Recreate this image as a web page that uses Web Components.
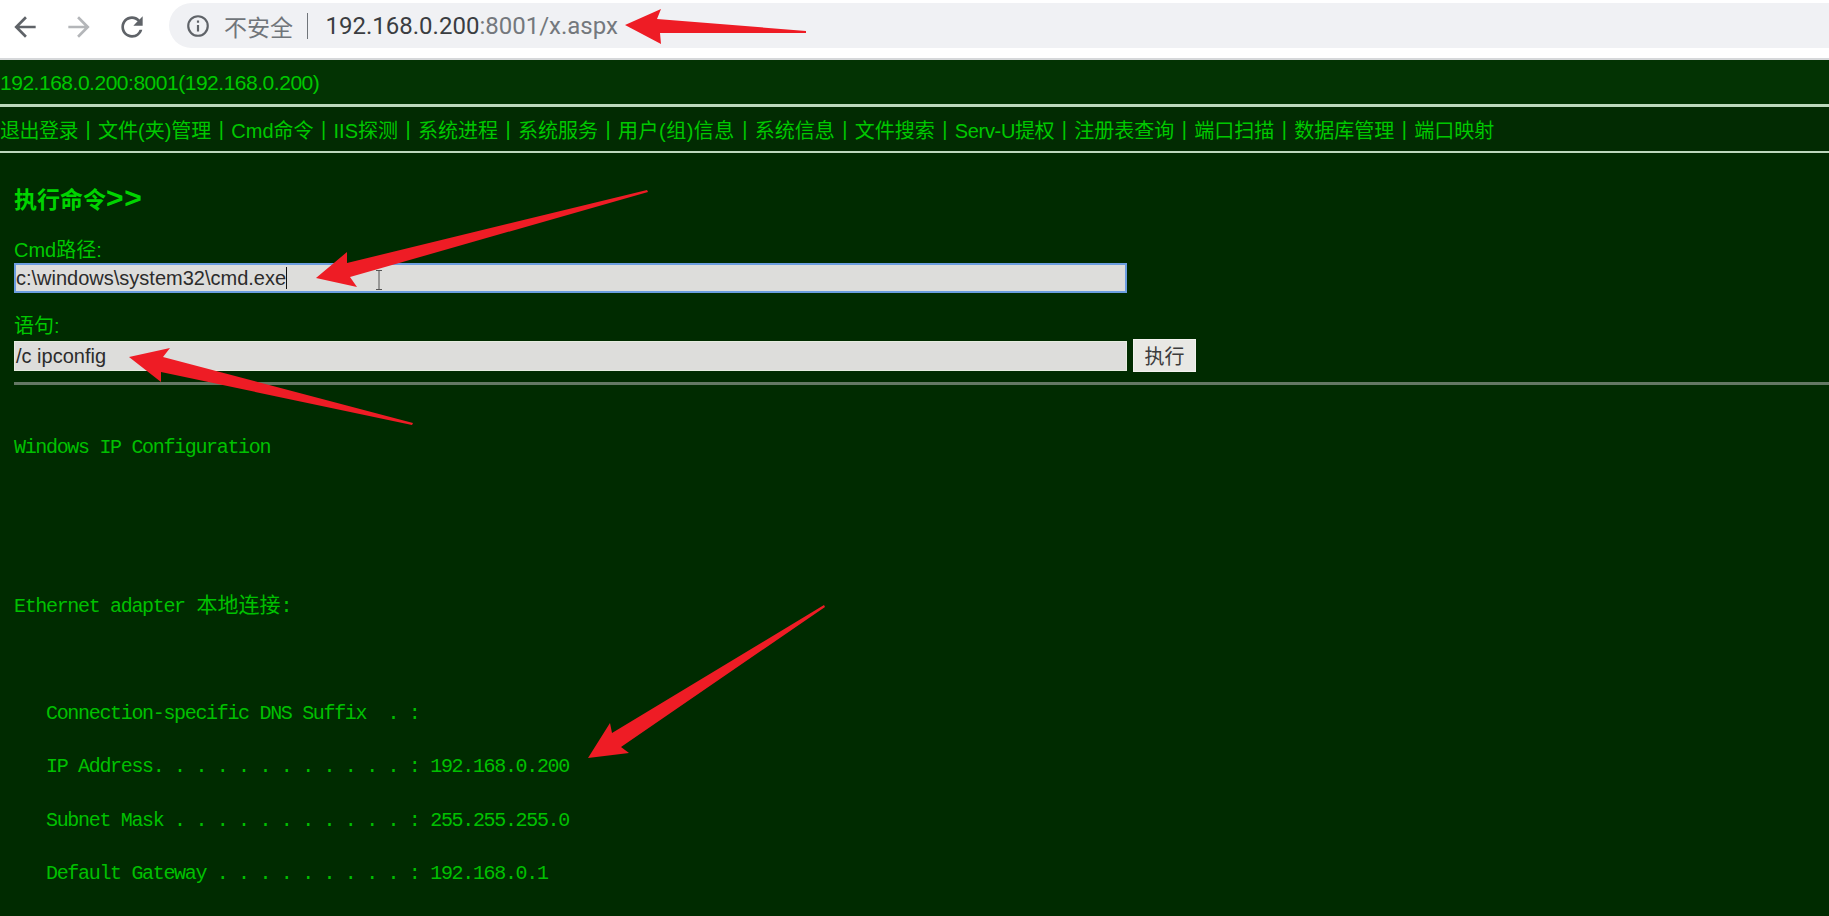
<!DOCTYPE html>
<html lang="zh">
<head>
<meta charset="utf-8">
<title>x.aspx</title>
<style>
    html, body { margin: 0; height: 100%; background: #002b00; overflow: hidden; }
    body {
        position: relative;
        font-family: "Liberation Sans", "Noto Sans CJK SC", sans-serif;
    }
</style>
</head>
<body>
<browser-bar host="192.168.0.200" rest=":8001/x.aspx"></browser-bar>
<shell-page>
    <shell-header title-text="192.168.0.200:8001(192.168.0.200)"></shell-header>
    <cmd-form></cmd-form>
    <cmd-output></cmd-output>
</shell-page>
<red-arrows></red-arrows>

<script>
class BrowserBar extends HTMLElement {
    connectedCallback() {
        this.attachShadow({ mode: 'open' });
        this.shadowRoot.innerHTML = `
            <style>
                :host {
                    display: flex;
                    align-items: flex-start;
                    box-sizing: border-box;
                    height: 60px;
                    padding: 3px 0 0 9px;
                    gap: 21px;
                    background: #fff;
                    border-bottom: 2px solid #d6d8da;
                    font-family: "Roboto", "Noto Sans CJK SC", sans-serif;
                }
                svg { display: block; flex: none; margin-top: 8px; fill: #5f6368; }
                .fwd { margin-left: 1px; fill: #b4b6b9; }
                .omni {
                    flex: 1;
                    display: flex;
                    align-items: center;
                    height: 45px;
                    padding-left: 16px;
                    background: #f0f1f4;
                    border-radius: 23px 0 0 23px;
                    font-size: 24px;
                }
                .omni svg { margin: 0; width: 26px; height: 26px; }
                .warn { margin-left: 13px; color: #70757a; font-size: 23px; }
                .bar { margin: 0 17.5px 0 14px; width: 1px; height: 26px; background: #70757a; }
                .host { color: #3a3d41; }
                .rest { color: #74787d; }
            </style>
            <svg class="back" width="32" height="32" viewBox="0 0 24 24"><path d="M20 11H7.83l5.59-5.59L12 4l-8 8 8 8 1.41-1.41L7.83 13H20v-2z"/></svg>
            <svg class="fwd" width="32" height="32" viewBox="0 0 24 24"><path d="M12 4l-1.41 1.41L16.17 11H4v2h12.17l-5.58 5.59L12 20l8-8z"/></svg>
            <svg class="reload" width="32" height="32" viewBox="0 0 24 24"><path d="M17.65 6.35A7.958 7.958 0 0 0 12 4c-4.42 0-7.99 3.58-7.99 8s3.57 8 7.99 8c3.73 0 6.84-2.55 7.73-6h-2.08A5.99 5.99 0 0 1 12 18c-3.31 0-6-2.69-6-6s2.69-6 6-6c1.66 0 3.14.69 4.22 1.78L13 11h7V4l-2.35 2.35z"/></svg>
            <div class="omni">
                <svg viewBox="0 0 24 24"><path d="M11 7h2v2h-2zm0 4h2v6h-2zm1-9a10 10 0 1 0 0 20 10 10 0 0 0 0-20zm0 18a8 8 0 1 1 0-16 8 8 0 0 1 0 16z"/></svg>
                <span class="warn">不安全</span>
                <span class="bar"></span>
                <span class="host">${this.getAttribute('host')}</span><span class="rest">${this.getAttribute('rest')}</span>
            </div>
        `;
    }
}

class ShellPage extends HTMLElement {
    connectedCallback() {
        this.attachShadow({ mode: 'open' });
        this.shadowRoot.innerHTML = `
            <style>
                :host {
                    display: block;
                    background: #002b00;
                    color: #00c800;
                    font-size: 20px;
                }
            </style>
            <slot></slot>
        `;
    }
}

class ShellHeader extends HTMLElement {
    connectedCallback() {
        // second value: letter-spacing nudge, the original font sets these a little wider or narrower
        const links = [['退出登录', -.5], ['文件(夹)管理'], ['Cmd命令'], ['IIS探测'], ['系统进程'], ['系统服务'],
            ['用户(组)信息', .5], ['系统信息'], ['文件搜索'], ['Serv-U提权', -.35], ['注册表查询'], ['端口扫描'],
            ['数据库管理'], ['端口映射']];
        this.attachShadow({ mode: 'open' });
        this.shadowRoot.innerHTML = `
            <style>
                :host { display: block; }
                .title {
                    height: 44px;
                    line-height: 46px;
                    background: #033303;
                    font-size: 21px;
                    letter-spacing: -.48px;
                }
                hr { margin: 0; height: 2px; border: 0; background: #bcd8bc; }
                hr.thick { height: 3px; }
                nav {
                    display: flex;
                    align-items: center;
                    height: 44px;
                    background: #022b02;
                    white-space: nowrap;
                }
                a { color: inherit; text-decoration: none; }
                .sep { display: inline-block; width: 20px; text-align: center; }
            </style>
            <div class="title">${this.getAttribute('title-text')}</div>
            <hr class="thick">
            <nav>${links.map(([l, ls]) => `<a href="#"${ls ? ` style="letter-spacing:${ls}px"` : ''}>${l}</a>`).join('<span class="sep">|</span>')}</nav>
            <hr>
        `;
    }
}

class FieldBox extends HTMLElement {
    connectedCallback() {
        this.attachShadow({ mode: 'open' });
        this.shadowRoot.innerHTML = `
            <style>
                :host {
                    display: flex;
                    align-items: center;
                    box-sizing: border-box;
                    width: 1113px;
                    height: 30px;
                    padding-left: 1px;
                    background: #dddddb;
                    border: 1px solid #e6ece0;
                    color: #2c2c2c;
                    font-size: 20px;
                    line-height: 24px;
                    white-space: nowrap;
                }
                :host([focused]) { border: 2px solid #6c9ee0; padding-left: 0; }
                .caret { display: none; width: 1px; height: 22px; background: #111; }
                :host([focused]) .caret { display: block; }
            </style>
            <slot></slot><span class="caret"></span>
        `;
    }
}

class CmdForm extends HTMLElement {
    connectedCallback() {
        this.attachShadow({ mode: 'open' });
        this.shadowRoot.innerHTML = `
            <style>
                :host { display: block; padding: 0 0 0 14px; }
                h2 {
                    margin: 0;
                    padding-top: 28px;
                    height: 34px;
                    line-height: 34px;
                    color: #00d400;
                    font-size: 23px;
                }
                h2 span { font-size: 30px; letter-spacing: .8px; }
                label { display: block; height: 25px; line-height: 25px; }
                .l1 { margin-top: 23px; }
                .l2 { margin-top: 21px; }
                .row { display: flex; align-items: center; gap: 6px; }
                .row field-box { margin-top: 1px; }
                button {
                    box-sizing: border-box;
                    width: 63px;
                    height: 33px;
                    padding: 0;
                    background: #e8e8e4;
                    border: 1px solid #f2f2ee;
                    color: #3c3c3c;
                    font: 20px "Noto Sans CJK SC", sans-serif;
                }
                hr { margin: 10px 0 0; height: 3px; border: 0; background: #647864; }
                .beam { position: absolute; left: 374px; top: 270px; width: 10px; height: 20px; }
            </style>
            <h2>执行命令<span>&gt;&gt;</span></h2>
            <label class="l1">Cmd路径:</label>
            <field-box focused>c:\\windows\\system32\\cmd.exe</field-box>
            <label class="l2">语句:</label>
            <div class="row">
                <field-box>/c ipconfig</field-box>
                <button>执行</button>
            </div>
            <hr>
            <svg class="beam" viewBox="0 0 10 20"><path d="M2 .5h6M5 .5v19M2 19.5h6" fill="none" stroke="#555" stroke-width="1"/></svg>
        `;
    }
}

class CmdOutput extends HTMLElement {
    connectedCallback() {
        const lines = ['Windows IP Configuration', '', '', '', '', '',
            'Ethernet adapter <span class="cjk">本地连接</span>:', '', '', '',
            '   Connection-specific DNS Suffix  . :', '',
            '   IP Address. . . . . . . . . . . . : 192.168.0.200', '',
            '   Subnet Mask . . . . . . . . . . . : 255.255.255.0', '',
            '   Default Gateway . . . . . . . . . : 192.168.0.1'];
        this.attachShadow({ mode: 'open' });
        this.shadowRoot.innerHTML = `
            <style>
                :host {
                    display: block;
                    padding: 49.5px 0 0 14px;
                    color: #00c000;
                    font: 20px/26.67px "Liberation Mono", "Noto Sans CJK SC", monospace;
                    letter-spacing: -1.33px;
                }
                div { height: 26.67px; white-space: pre; }
                .cjk { margin-left: 1px; font-size: 21px; letter-spacing: 0; }
            </style>
            ${lines.map(l => `<div>${l}</div>`).join('')}
        `;
    }
}

// the four red annotation arrows painted over the screenshot
class RedArrows extends HTMLElement {
    connectedCallback() {
        this.attachShadow({ mode: 'open' });
        this.shadowRoot.innerHTML = `
            <style>
                :host { position: absolute; left: 0; top: 0; width: 1829px; height: 916px; pointer-events: none; }
                svg { display: block; }
                polygon { fill: #ee1c25; }
            </style>
            <svg width="1829" height="916">
                <polygon points="625,25 661,9 657,19 806,31 806,33 660,33 661,44"/>
                <polygon points="316,278 347,252 347,263 647,190 648,192 350,277 357,287"/>
                <polygon points="129,357 170,348 163,357 413,423 412,425 161,372 161,382"/>
                <polygon points="588,758 610,723 612,733 824,605 825,607 621,747 629,753"/>
            </svg>
        `;
    }
}

customElements.define('browser-bar', BrowserBar);
customElements.define('shell-page', ShellPage);
customElements.define('shell-header', ShellHeader);
customElements.define('field-box', FieldBox);
customElements.define('cmd-form', CmdForm);
customElements.define('cmd-output', CmdOutput);
customElements.define('red-arrows', RedArrows);
</script>
</body>
</html>
